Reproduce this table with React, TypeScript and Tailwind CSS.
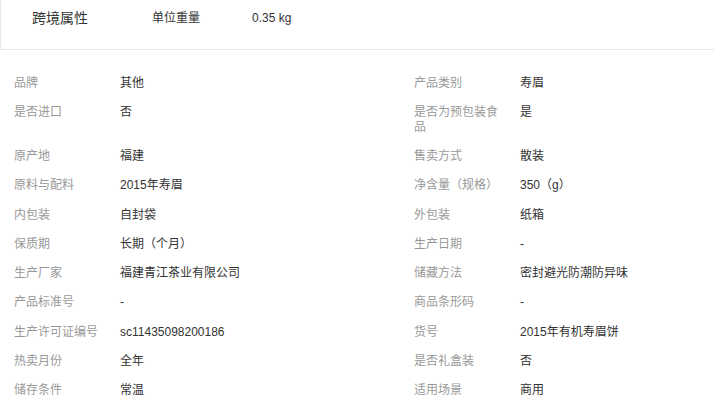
const attrs: [string, string][] = [
  ['品牌', '其他'],
  ['产品类别', '寿眉'],
  ['是否进口', '否'],
  ['是否为预包装食品', '是'],
  ['原产地', '福建'],
  ['售卖方式', '散装'],
  ['原料与配料', '2015年寿眉'],
  ['净含量（规格）', '350（g）'],
  ['内包装', '自封袋'],
  ['外包装', '纸箱'],
  ['保质期', '长期（个月）'],
  ['生产日期', '-'],
  ['生产厂家', '福建青江茶业有限公司'],
  ['储藏方法', '密封避光防潮防异味'],
  ['产品标准号', '-'],
  ['商品条形码', '-'],
  ['生产许可证编号', 'sc11435098200186'],
  ['货号', '2015年有机寿眉饼'],
  ['热卖月份', '全年'],
  ['是否礼盒装', '否'],
  ['储存条件', '常温'],
  ['适用场景', '商用'],
]

export default function App() {
  return (
    <div
      className="h-[405px] w-[714px] overflow-hidden bg-white"
      style={{ fontFamily: '"Liberation Sans", "Noto Sans CJK SC", sans-serif' }}
    >
      {/* Cross-border attributes */}
      <div className="flex h-[50px] w-[800px] items-start border-b border-l border-[#e6e6e6] pl-[31px] pt-[8px]">
        <span className="w-[120px] text-[14px] leading-[20px] text-[#333]">跨境属性</span>
        <span className="w-[100px] text-[12px] leading-[20px] text-[#333]">单位重量</span>
        <span className="text-[12px] leading-[20px] text-[#333]">0.35 kg</span>
      </div>

      {/* Basic attributes */}
      <div className="mt-[18.5px] grid w-[814px] grid-cols-[400px_400px] pl-[14px]">
        {attrs.map(([label, value]) => (
          <div key={label} className="flex items-start py-[7.125px] text-[12px] leading-[15px]">
            <span className="w-[90px] shrink-0 text-[#999]">{label}</span>
            <span className="ml-4 text-[#333]">{value}</span>
          </div>
        ))}
      </div>
    </div>
  )
}
